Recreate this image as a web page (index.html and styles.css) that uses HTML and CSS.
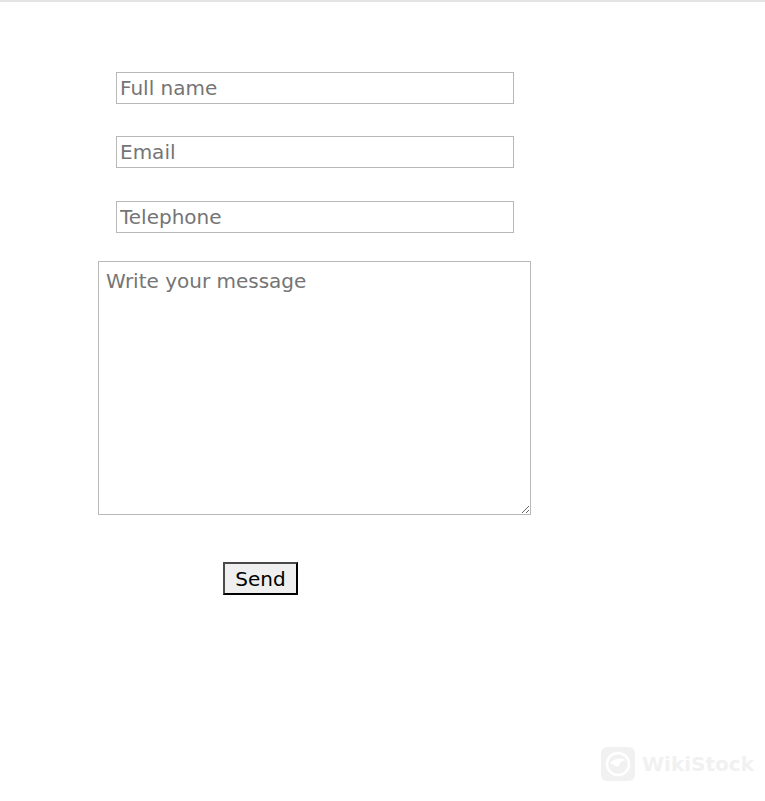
FILE: index.html
```html
<!DOCTYPE html>
<html lang="en">
<head>
  <meta charset="UTF-8">
  <title>Contact</title>
  <link rel="stylesheet" href="styles.css">
</head>
<body>

<form class="contact">
  <input type="text" class="field" placeholder="Full name">
  <input type="email" class="field" placeholder="Email">
  <input type="tel" class="field" placeholder="Telephone">
  <textarea class="message" placeholder="Write your message"></textarea>
  <button type="submit" class="send">Send</button>
</form>

<div class="brand">
  <svg class="brand-logo" width="36" height="36" viewBox="0 0 36 36">
    <rect x="1" y="1" width="34" height="34" rx="6" fill="#f1f1f1"/>
    <circle cx="18" cy="18" r="11" fill="none" stroke="#fff" stroke-width="2.5"/>
    <path d="M10 17 q7 -7 16 -3 q-6 1 -8 7 z" fill="#fff"/>
  </svg>
  <span>WikiStock</span>
</div>

</body>
</html>
```

FILE: styles.css
```css
* { box-sizing: border-box; }
body { margin: 0; border-top: 2px solid #e4e4e4; font-family: "DejaVu Sans", Verdana, sans-serif; }
.contact { display: flex; flex-direction: column; align-items: flex-start; padding: 70px 0 0 98px; }
.field, .message { font-family: inherit; font-size: 20px; border: 1px solid #b8b8b8; color: #333; }
.field { width: 398px; height: 32px; margin: 0 0 32px 18px; padding: 0 3px; }
.field:nth-of-type(2) { margin-bottom: 33px; }
.field:nth-of-type(3) { margin-bottom: 28px; }
.message { width: 433px; height: 254px; padding: 7px 7px; resize: both; }
.send { margin: 47px 0 0 125px; height: 33px; width: 75px; padding: 0; font-family: inherit; font-size: 20px; color: #000; background: #efefef; border: 2px solid; border-color: #4a4a4a #000 #000 #4a4a4a; }
.brand { position: absolute; left: 600px; top: 746px; display: flex; align-items: center; gap: 6px; font-family: "DejaVu Sans", sans-serif; font-weight: bold; font-size: 20px; color: #f1f1f1; }
```
